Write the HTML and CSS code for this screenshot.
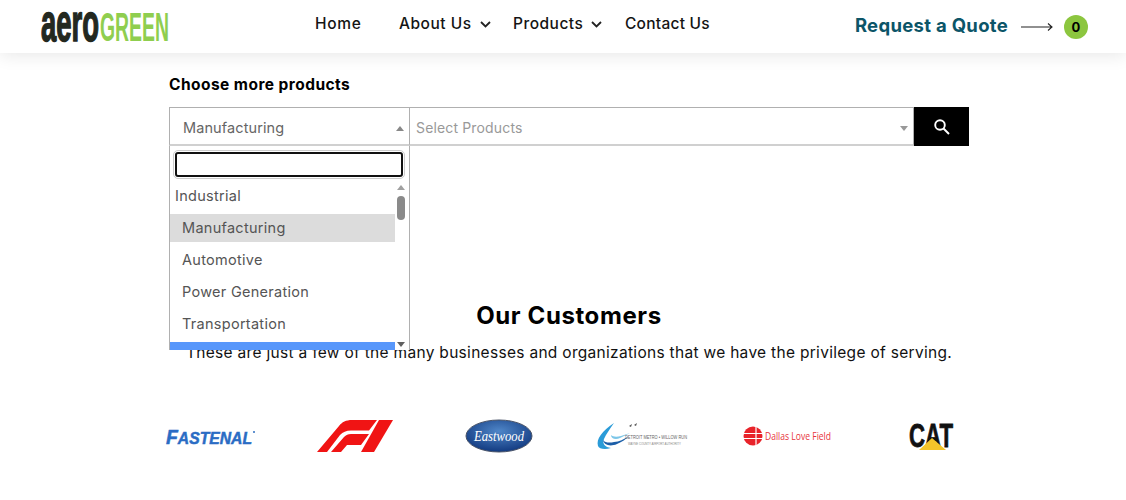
FILE: index.html
```html
<!DOCTYPE html>
<html lang="en">
<head>
<meta charset="utf-8">
<title>AeroGreen</title>
<link rel="stylesheet" href="styles.css">
</head>
<body>
<header class="site-header">
  <a class="logo" href="#">
    <svg width="128" height="36" viewBox="0 0 128 36">
      <text class="logo-aero" x="0" y="34" textLength="58" lengthAdjust="spacingAndGlyphs">aero</text>
      <text class="logo-green" x="59" y="34" textLength="69" lengthAdjust="spacingAndGlyphs">GREEN</text>
    </svg>
  </a>
  <nav class="nav">
    <a class="nav-link nav-home" href="#">Home</a>
    <a class="nav-link nav-about" href="#">About Us<svg class="chev" width="11" height="7" viewBox="0 0 11 7"><path d="M1 1l4.500 4.500L10 1"/></svg></a>
    <a class="nav-link nav-products" href="#">Products<svg class="chev" width="11" height="7" viewBox="0 0 11 7"><path d="M1 1l4.500 4.500L10 1"/></svg></a>
    <a class="nav-link nav-contact" href="#">Contact Us</a>
  </nav>
  <div class="quote">
    <a class="quote-link" href="#">Request a Quote</a>
    <svg class="quote-arrow" width="32" height="10" viewBox="0 0 32 10"><path d="M0 5h31M27 1.500l4 3.500-4 3.500"/></svg>
    <span class="badge">0</span>
  </div>
</header>

<main class="content">
  <h2 class="choose">Choose more products</h2>
  <div class="filter">
    <div class="select select-cat">
      <span class="select-value">Manufacturing</span>
      <span class="caret caret-up"></span>
    </div>
    <div class="select select-prod">
      <span class="select-placeholder">Select Products</span>
      <span class="caret"></span>
    </div>
    <button class="search-btn" type="button" aria-label="Search">
      <svg width="18" height="18" viewBox="0 0 18 18"><circle cx="7" cy="7" r="4.800"/><path d="M10.500 10.500L16 16"/></svg>
    </button>

    <div class="dropdown">
      <div class="dropdown-search"><input class="dropdown-input" type="text"></div>
      <div class="dropdown-body">
        <ul class="options">
          <li class="group">Industrial</li>
          <li class="option"><span class="option-label is-selected">Manufacturing</span></li>
          <li class="option"><span class="option-label">Automotive</span></li>
          <li class="option"><span class="option-label">Power Generation</span></li>
          <li class="option"><span class="option-label">Transportation</span></li>
          <li class="option-active"></li>
        </ul>
        <div class="scrollbar">
          <span class="sb-arrow sb-up"></span>
          <span class="sb-thumb"></span>
          <span class="sb-arrow sb-down"></span>
        </div>
      </div>
    </div>
  </div>

  <section class="customers">
    <h2 class="customers-title">Our Customers</h2>
    <p class="customers-text">These are just a few of the many businesses and organizations that we have the privilege of serving.</p>
    <div class="logos">
      <svg width="90" height="20" viewBox="0 0 90 20">
        <text class="l-fastenal" x="0" y="18" textLength="86" lengthAdjust="spacingAndGlyphs"><tspan class="l-fastenal-cap">F</tspan>ASTENAL</text>
        <circle cx="88" cy="6" r="1" fill="#2f6fc0"/>
      </svg>
      <svg width="76" height="32" viewBox="0 0 76 32">
        <path fill="#f01414" d="M0 32L22 6C25 2 29 0 35 0H60L52 10.500H34C29 10.500 26 12 23 15L10 32Z"/>
        <path fill="#f01414" d="M14 32L27 17C29 15 31 14 34 14H52L44 25H30L24 32Z"/>
        <path fill="#f01414" d="M62 0H76L57 32H44Z"/>
      </svg>
      <svg width="68" height="34" viewBox="0 0 68 34">
        <defs><radialGradient id="eg" cx="50%" cy="35%" r="65%"><stop offset="0" stop-color="#4f86c8"/><stop offset="1" stop-color="#123a80"/></radialGradient></defs>
        <ellipse cx="34" cy="17" rx="33" ry="16" fill="url(#eg)" stroke="#4a5468"/>
        <text class="l-eastwood" x="34" y="22" text-anchor="middle" textLength="50" lengthAdjust="spacingAndGlyphs">Eastwood</text>
      </svg>
      <svg width="92" height="28" viewBox="0 0 92 28">
        <path fill="#2a9bd8" d="M17 1C5 9-1 17 1 24c1 3 7 4 13 2C8 25 5 22 7 17 9 12 13 7 17 1Z"/>
        <path fill="#1b5ea8" d="M6 18c1 5 7 7 14 4 5-2 9-5 12-8-5 3-10 6-15 6-4 1-9 1-11-2Z"/>
        <path fill="#7cc6e8" d="M14 13c0 4 5 5 9 3l10-5-9 3c-4 1-8 1-10-1Z"/>
        <path d="M32 4l3-2-1 3ZM37 3l3-2-1 3Z" fill="#555"/>
        <text class="l-metro" x="28" y="17" textLength="62" lengthAdjust="spacingAndGlyphs">DETROIT METRO • WILLOW RUN</text>
        <text class="l-metro-sub" x="31" y="23" textLength="53" lengthAdjust="spacingAndGlyphs">WAYNE COUNTY AIRPORT AUTHORITY</text>
      </svg>
      <svg width="88" height="20" viewBox="0 0 88 20">
        <circle cx="10" cy="10" r="9.500" fill="#e8232a"/>
        <path d="M0 7.500h20M0 12.500h20M13 0v20" stroke="#fff" stroke-width="1.200"/>
        <text class="l-dallas" x="22" y="14" textLength="66" lengthAdjust="spacingAndGlyphs">Dallas Love Field</text>
      </svg>
      <svg width="44" height="28" viewBox="0 0 44 28">
        <text class="l-cat" x="0" y="25" textLength="44" lengthAdjust="spacingAndGlyphs">CAT</text>
        <path fill="#f3c52a" d="M10 28L23 16l14 12Z"/>
      </svg>
    </div>
  </section>
</main>
</body>
</html>
```
FILE: styles.css
```css
* { box-sizing: border-box; }
html, body { margin: 0; padding: 0; }
body {
  background: #fff;
  color: #000;
  font-family: Inter, "Open Sans", sans-serif;
  height: 500px;
  overflow: hidden;
}
a { color: inherit; text-decoration: none; }
svg { overflow: visible; }

.site-header {
  height: 53px;
  display: flex;
  background: #fff;
  box-shadow: 0 3px 16px rgba(0, 0, 0, .09);
  position: relative;
  z-index: 1;
}
.logo { margin: 7px 0 0 41px; width: 128px; height: 36px; }
.logo-aero, .logo-green {
  font-family: "Liberation Sans Narrow", "Liberation Sans", sans-serif;
  font-weight: 700;
}
.logo-aero { font-size: 54px; fill: #23281f; stroke: #23281f; stroke-width: 1.600px; }
.logo-green { font-size: 41px; fill: #8fce4f; }

.nav { display: flex; margin-left: 146px; padding-top: 13px; height: 40px; }
.nav-link {
  display: flex;
  align-items: center;
  height: 20px;
  font-size: 15.500px;
  font-weight: 500;
  color: #141414;
  letter-spacing: .5px;
  white-space: nowrap;
}
.nav-home { width: 84px; letter-spacing: .7px; }
.nav-about { width: 114px; }
.nav-products { width: 112px; }
.nav-contact { letter-spacing: .25px; }
.chev { margin: 3px 0 0 8px; fill: none; stroke: #222; stroke-width: 1.800; }

.quote { display: flex; align-items: center; margin-left: 145px; height: 24px; margin-top: 15px; }
.quote-link { font-size: 18.500px; font-weight: 700; color: #0c5568; letter-spacing: .3px; white-space: nowrap; width: 166px; margin-bottom: 4px; }
.quote-arrow { fill: none; stroke: #222; stroke-width: 1.100; margin-right: 11px; }
.badge {
  width: 24px;
  height: 24px;
  border-radius: 50%;
  background: #8cc63f;
  display: flex;
  align-items: center;
  justify-content: center;
  font-size: 13px;
  font-weight: 700;
}

.content { width: 800px; margin-left: 169px; }
.choose { margin: 23px 0 0; height: 31px; font-size: 15.500px; line-height: 18px; font-weight: 700; letter-spacing: .45px; white-space: nowrap; }

.filter { display: flex; height: 39px; position: relative; }
.select {
  display: flex;
  align-items: center;
  border: 1px solid #b0b0b0;
  border-bottom-width: 2px;
  border-bottom-color: #d0d0d0;
  background: #fff;
  position: relative;
  font-size: 14.500px;
  letter-spacing: .1px;
  padding-top: 3px;
}
.select-cat { width: 241px; padding-left: 13px; }
.select-prod { width: 504px; padding-left: 6px; border-left: 0; }
.select-value { color: #666; }
.select-placeholder { color: #999; font-size: 14px; letter-spacing: .15px; }
.caret {
  position: absolute;
  right: 5px;
  top: 18px;
  border-left: 4px solid transparent;
  border-right: 4px solid transparent;
  border-top: 5px solid #999;
}
.caret-up { border-top: 0; border-bottom: 5px solid #888; }
.search-btn {
  width: 55px;
  height: 39px;
  border: 0;
  padding: 0;
  background: #000;
  display: flex;
  align-items: center;
  justify-content: center;
}
.search-btn svg { fill: none; stroke: #fff; stroke-width: 1.900; }

.dropdown {
  position: absolute;
  left: 0;
  top: 39px;
  width: 241px;
  height: 204px;
  background: #fff;
  border-left: 1px solid #b0b0b0;
  border-right: 1px solid #b0b0b0;
  z-index: 2;
  overflow: hidden;
  display: flex;
  flex-direction: column;
}
.dropdown-search { padding: 6px 6px 3px 5px; height: 34px; flex: none; }
.dropdown-input {
  display: block;
  width: 100%;
  height: 25px;
  border: 2px solid #111;
  border-radius: 3px;
  outline: 1px solid #ccc;
  outline-offset: 1px;
  background: #fff;
}
.dropdown-body { flex: 1; display: flex; min-height: 0; }
.options {
  list-style: none;
  margin: 0;
  padding: 0;
  flex: 1;
  font-size: 14.500px;
  color: #555;
  letter-spacing: .28px;
}
.group { height: 32px; line-height: 32px; padding-left: 5px; }
.option { height: 32px; display: flex; align-items: center; }
.option-label { display: block; width: 100%; height: 28px; line-height: 28px; padding-left: 12px; }
.is-selected { background: #dcdcdc; }
.option-active { height: 8px; margin-top: 2px; background: #5897fb; }
.scrollbar { width: 14px; position: relative; background: #fff; flex: none; }
.sb-thumb { position: absolute; left: 2px; top: 16px; width: 8px; height: 24px; border-radius: 4px; background: #8a8a8a; }
.sb-arrow { position: absolute; left: 2px; border-left: 4px solid transparent; border-right: 4px solid transparent; }
.sb-up { top: 5px; border-bottom: 5px solid #a0a0a0; }
.sb-down { bottom: 3px; border-top: 5px solid #606060; }

.customers { margin-top: 155px; text-align: center; }
.customers-title { margin: 0; font-size: 24px; line-height: 30px; font-weight: 700; letter-spacing: .6px; }
.customers-text { margin: 12px 0 0; font-size: 15.500px; line-height: 20px; color: #111; white-space: nowrap; letter-spacing: .3px; }
.logos { display: grid; grid-template-columns: repeat(6, 144px); justify-items: center; align-items: center; margin: 55px 0 0 -30px; height: 36px; width: 864px; }

.l-fastenal { font-family: "Liberation Sans", sans-serif; font-weight: 700; font-style: italic; font-size: 17px; fill: #2a6cc4; stroke: #2a6cc4; stroke-width: .5px; }
.l-fastenal-cap { font-size: 21px; }
.l-eastwood { font-family: "Liberation Serif", serif; font-style: italic; font-size: 15px; fill: #fff; }
.l-metro { font-family: "Liberation Sans", sans-serif; font-size: 4.500px; fill: #666; }
.l-metro-sub { font-family: "Liberation Sans", sans-serif; font-size: 3px; fill: #888; }
.l-dallas { font-family: "Open Sans", sans-serif; font-size: 10px; fill: #e8323a; }
.l-cat { font-family: "Liberation Sans", sans-serif; font-weight: 700; font-size: 34px; fill: #111; stroke: #111; stroke-width: .8px; }
```
